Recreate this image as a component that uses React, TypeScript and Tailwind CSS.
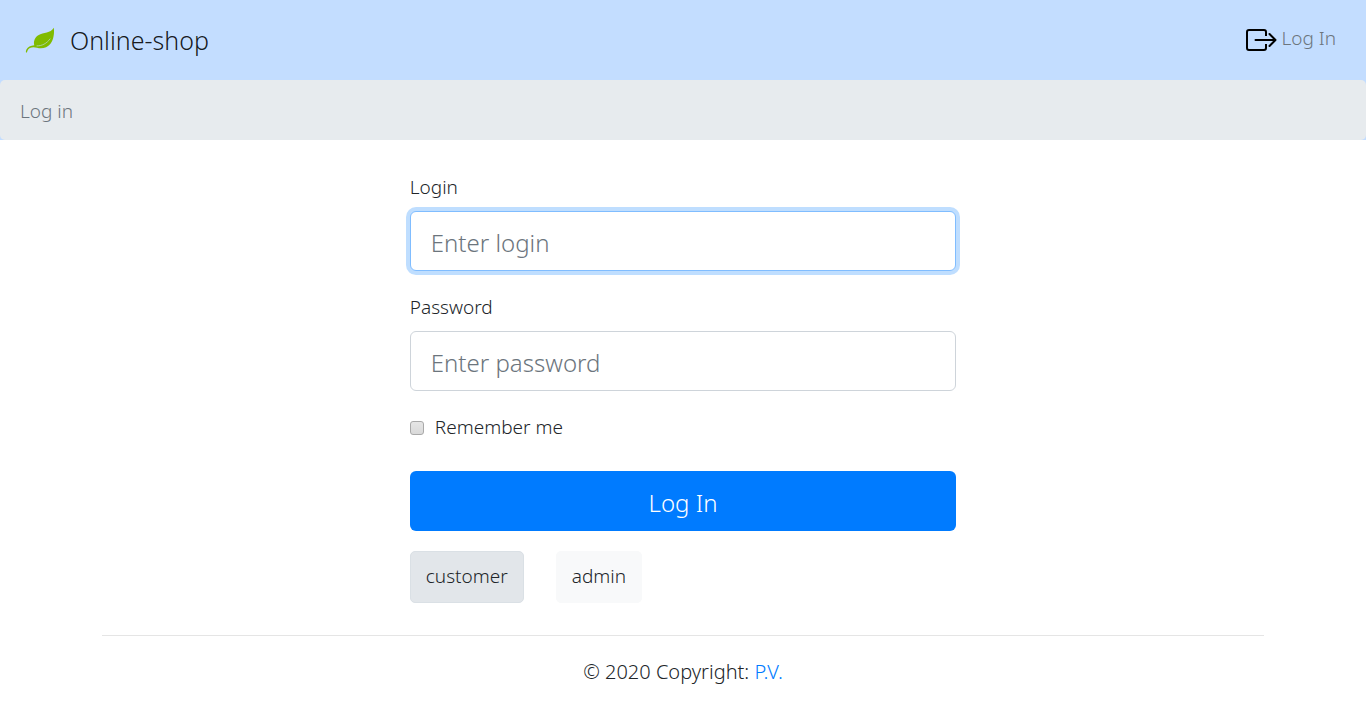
import React from "react";

function LeafLogo() {
  return (
    <svg className="size-[30px]" viewBox="0 0 30 30" aria-hidden="true">
      <path
        fill="#80bb00"
        d="M28.800 2.800C29.500 8 28.700 14.500 25.500 18.700C22 22.900 17 24 12 22.700C7.500 21.300 3.900 22.700 2.700 25.200C2.200 26.500 1.900 27.600 1.300 27.700C.600 27.500 .900 25.600 1.600 24.300C2.800 22 5.500 20.500 9.300 20.200C8.200 16.500 10 12.200 13.300 10.300C18.600 7.200 25.600 8.500 28.800 2.800Z"
      />
      <path
        fill="none"
        stroke="#c3ddff"
        strokeWidth=".6"
        strokeLinecap="round"
        d="M12 20.900C17 20.900 21.500 18.700 25 14"
      />
    </svg>
  );
}

function LogInIcon() {
  return (
    <svg
      className="h-6 w-8"
      viewBox="0 0 32 24"
      fill="none"
      stroke="#000"
      strokeWidth="2"
      strokeLinejoin="round"
      aria-hidden="true"
    >
      <path d="M21 8V4Q21 2 19 2H4Q2 2 2 4V20Q2 22 4 22H19Q21 22 21 20V16" />
      <path strokeLinecap="round" d="M10.500 12H30M24.500 6L30.500 12L24.500 18" />
    </svg>
  );
}

const fieldClass =
  "block h-15 w-full rounded-md border bg-white px-5 pt-0.5 text-[24px] text-[#495057] outline-none placeholder:text-[#6c757d]";

export default function App() {
  return (
    <div className="font-['Noto_Sans','Open_Sans',sans-serif] text-[19px] leading-[30px] font-light text-[#212529]">
      <header className="bg-[#c3ddff]">
        <nav className="flex h-20 items-center justify-between pr-[30px] pl-[25px]">
          <a href="#home" className="flex items-center gap-[15px] text-[25px] text-black/90">
            <LeafLogo />
            <span>Online-shop</span>
          </a>
          <a href="#login" className="flex items-center gap-1 text-[#6c757d]">
            <LogInIcon />
            <span className="pb-1">Log In</span>
          </a>
        </nav>
        <ol className="rounded-[5px] bg-[#e7ebee] px-5 pt-4 pb-3.5 text-[#6c757d]">
          <li>Log in</li>
        </ol>
      </header>

      <main className="mx-auto mt-8 w-2/5">
        <form onSubmit={(e) => e.preventDefault()}>
          <label htmlFor="login" className="mb-[9px] block">Login</label>
          <input
            id="login"
            type="text"
            placeholder="Enter login"
            className={`${fieldClass} border-[#80bdff] ring-4 ring-[#bfdeff]`}
          />
          <label htmlFor="password" className="mt-[21px] mb-[9px] block">Password</label>
          <input
            id="password"
            type="password"
            placeholder="Enter password"
            className={`${fieldClass} border-[#ced4da]`}
          />
          <div className="mt-[21px] flex items-center gap-[11px]">
            <input
              id="remember"
              type="checkbox"
              className="mt-0.5 size-3.5 appearance-none rounded-[3px] border border-[#a9a9a9] bg-linear-to-b from-[#e6e6e6] to-[#d9d9d9] checked:from-[#007bff] checked:to-[#007bff]"
            />
            <label htmlFor="remember">Remember me</label>
          </div>
          <button
            type="submit"
            className="mt-[29px] block h-15 w-full rounded-md bg-[#007bff] pt-1 text-[24px] text-white"
          >
            Log In
          </button>
          <div className="mt-5 flex gap-8">
            <button type="button" className="h-13 rounded-[5px] border border-[#dae0e5] bg-[#e2e6ea] px-[15px] pb-0.5">
              customer
            </button>
            <button type="button" className="h-13 rounded-[5px] border border-[#f8f9fa] bg-[#f8f9fa] px-[15px] pb-0.5">
              admin
            </button>
          </div>
        </form>
      </main>

      <footer className="mx-auto mt-8 w-[85%] border-t border-black/10 py-[21px] text-center text-[20px]">
        © 2020 Copyright: <a href="#author" className="text-[#007bff]">P.V.</a>
      </footer>
    </div>
  );
}
